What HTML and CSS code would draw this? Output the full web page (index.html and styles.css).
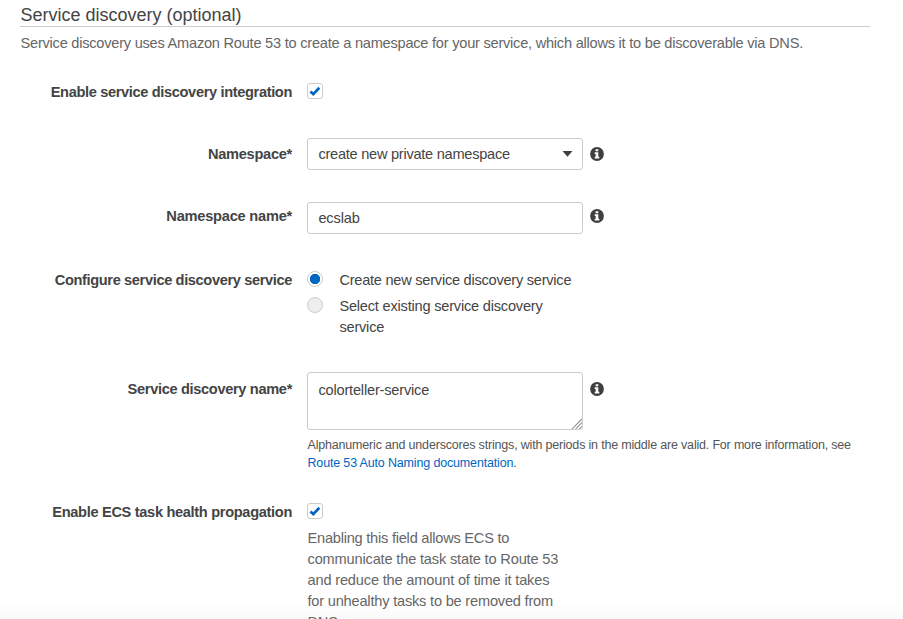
FILE: index.html
```html
<!DOCTYPE html>
<html lang="en">
<head>
<meta charset="utf-8">
<title>Service discovery</title>
<link rel="stylesheet" href="styles.css">
</head>
<body>
<svg width="0" height="0" class="defs">
  <symbol id="info" viewBox="0 0 14 14"><circle cx="7" cy="7" r="6.9" fill="#3f3f3f"/><path fill="#fff" d="M5.6 2.2h2.7v2H5.6zM4.7 5.3h3.6v4.5h1v1.7H4.7V9.8h1V7h-1z"/></symbol>
  <symbol id="check" viewBox="0 0 14 14"><path d="M2.4 7.5l2.9 2.6 6-6.3" fill="none" stroke="#0066c2" stroke-width="2.7"/></symbol>
</svg>
<main class="panel">
  <h2 class="title">Service discovery (optional)</h2>
  <p class="intro">Service discovery uses Amazon Route 53 to create a namespace for your service, which allows it to be discoverable via DNS.</p>

  <div class="row row-enable">
    <div class="label l-enable">Enable service discovery integration</div>
    <div class="field"><svg class="box"><use href="#check"/></svg></div>
  </div>
  <div class="row row-namespace">
    <div class="label l-ns">Namespace*</div>
    <div class="field"><div class="input"><span class="v-ns">create new private namespace</span><svg class="caret" viewBox="0 0 10 6"><path d="M0 0h10L5 5.8z" fill="#3f3f3f"/></svg></div><svg class="info"><use href="#info"/></svg></div>
  </div>
  <div class="row row-name">
    <div class="label l-nsname">Namespace name*</div>
    <div class="field"><div class="input"><span class="v-ecs">ecslab</span></div><svg class="info"><use href="#info"/></svg></div>
  </div>
  <div class="row row-config">
    <div class="label l-config">Configure service discovery service</div>
    <div class="choices">
      <div class="choice"><i class="radio on"></i><span class="c-new">Create new service discovery service</span></div>
      <div class="choice"><i class="radio"></i><span class="c-old">Select existing service discovery<br>service</span></div>
    </div>
  </div>
  <div class="row row-service">
    <div class="label l-sd">Service discovery name*</div>
    <div>
      <div class="field"><div class="input area"><span class="v-ct">colorteller-service</span><svg class="grip" viewBox="0 0 12 12"><path d="M1 12L12 1M5 12l7-7M9 12l3-3" stroke="#8a8a8a" stroke-width="1.1"/></svg></div><svg class="info"><use href="#info"/></svg></div>
      <p class="hint">Alphanumeric and underscores strings, with periods in the middle are valid. For more information, see<br><span class="more"><a>Route 53 Auto Naming documentation</a>.</span></p>
    </div>
  </div>
  <div class="row row-health">
    <div class="label l-health">Enable ECS task health propagation</div>
    <div>
      <div class="field"><svg class="box"><use href="#check"/></svg></div>
      <p class="note"><span class="n-first">Enabling this field allows ECS to</span><br>communicate the task state to Route 53<br>and reduce the amount of time it takes<br><span class="n-last">for unhealthy tasks to be removed from</span><br>DNS.</p>
    </div>
  </div>
</main>
</body>
</html>
```
FILE: styles.css
```css
* { box-sizing: border-box; }
html { height: 100%; overflow: hidden; }
body {
  margin: 0;
  height: 619px;
  overflow: hidden;
  background: linear-gradient(#fff 603px, #fafafa 619px);
  color: #444;
  font: 14.6px/21px "Liberation Sans", Arial, sans-serif;
}
.defs { display: block; }
p, h2 { margin: 0; }
.panel { padding: 0 33px 0 20px; white-space: nowrap; }
.title {
  height: 27px;
  padding: 3px 0 0 0.5px;
  border-bottom: 1px solid #ccc;
  font-size: 18px;
  font-weight: 400;
  line-height: 24px;
}
.intro { padding: 6px 0 0 0.5px; height: 54px; color: #666; letter-spacing: -0.235px; }
.row {
  display: grid;
  grid-template-columns: 272px 1fr;
  column-gap: 15px;
}
.label { font-weight: 700; text-align: right; }
.field { display: flex; align-items: flex-start; }
.row-enable { height: 57px; }
.row-namespace { height: 64px; }
.row-name { height: 64px; }
.row-config { height: 106px; }
.row-service { height: 129px; }
.l-enable { padding-top: 1px; letter-spacing: -0.35px; }
.l-ns { padding-top: 6px; letter-spacing: -0.27px; }
.l-nsname { padding-top: 4px; letter-spacing: -0.22px; }
.l-config { padding-top: 4px; letter-spacing: -0.36px; }
.l-sd { padding-top: 7px; letter-spacing: -0.33px; }
.l-health { padding-top: 1px; letter-spacing: -0.32px; }
.v-ns { letter-spacing: -0.26px; }
.v-ecs { letter-spacing: -0.15px; }
.v-ct { letter-spacing: -0.19px; }
.c-new { letter-spacing: -0.25px; }
.c-old { letter-spacing: -0.21px; }
.box {
  width: 16px;
  height: 16px;
  margin-top: 2px;
  border: 1px solid #ccc;
  border-radius: 3px;
}
.input {
  position: relative;
  display: flex;
  align-items: center;
  justify-content: space-between;
  width: 276px;
  height: 32px;
  padding: 0 9px 0 10.4px;
  border: 1px solid #ccc;
  border-radius: 3px;
  background: #fff;
}
.caret { width: 11px; height: 6px; }
.info { width: 14px; height: 14px; margin: 9px 0 0 7px; }
.row-name .info { margin-top: 7px; }
.area { height: 58px; align-items: flex-start; padding-top: 7px; }
.row-service .info { margin-top: 10px; }
.grip { position: absolute; right: 0; bottom: 0; width: 11px; height: 11px; }
.choices { padding-top: 4px; }
.choice { display: flex; gap: 16.4px; margin-bottom: 5px; }
.radio {
  width: 16px;
  height: 16px;
  margin-top: 1px;
  border: 1px solid #ccc;
  border-radius: 50%;
  background: #eee;
}
.radio.on { background: radial-gradient(circle, #0066c2 4.8px, #fff 5.5px); }
.hint { margin-top: 6px; padding-left: 0.5px; font-size: 12.5px; line-height: 18px; color: #555; letter-spacing: -0.185px; }
.more { letter-spacing: -0.16px; }
.hint a { color: #0066c2; }
.note { margin-top: 9px; padding-left: 0.5px; color: #666; letter-spacing: -0.17px; }
.n-first { letter-spacing: -0.23px; }
.n-last { letter-spacing: -0.2px; }
```
